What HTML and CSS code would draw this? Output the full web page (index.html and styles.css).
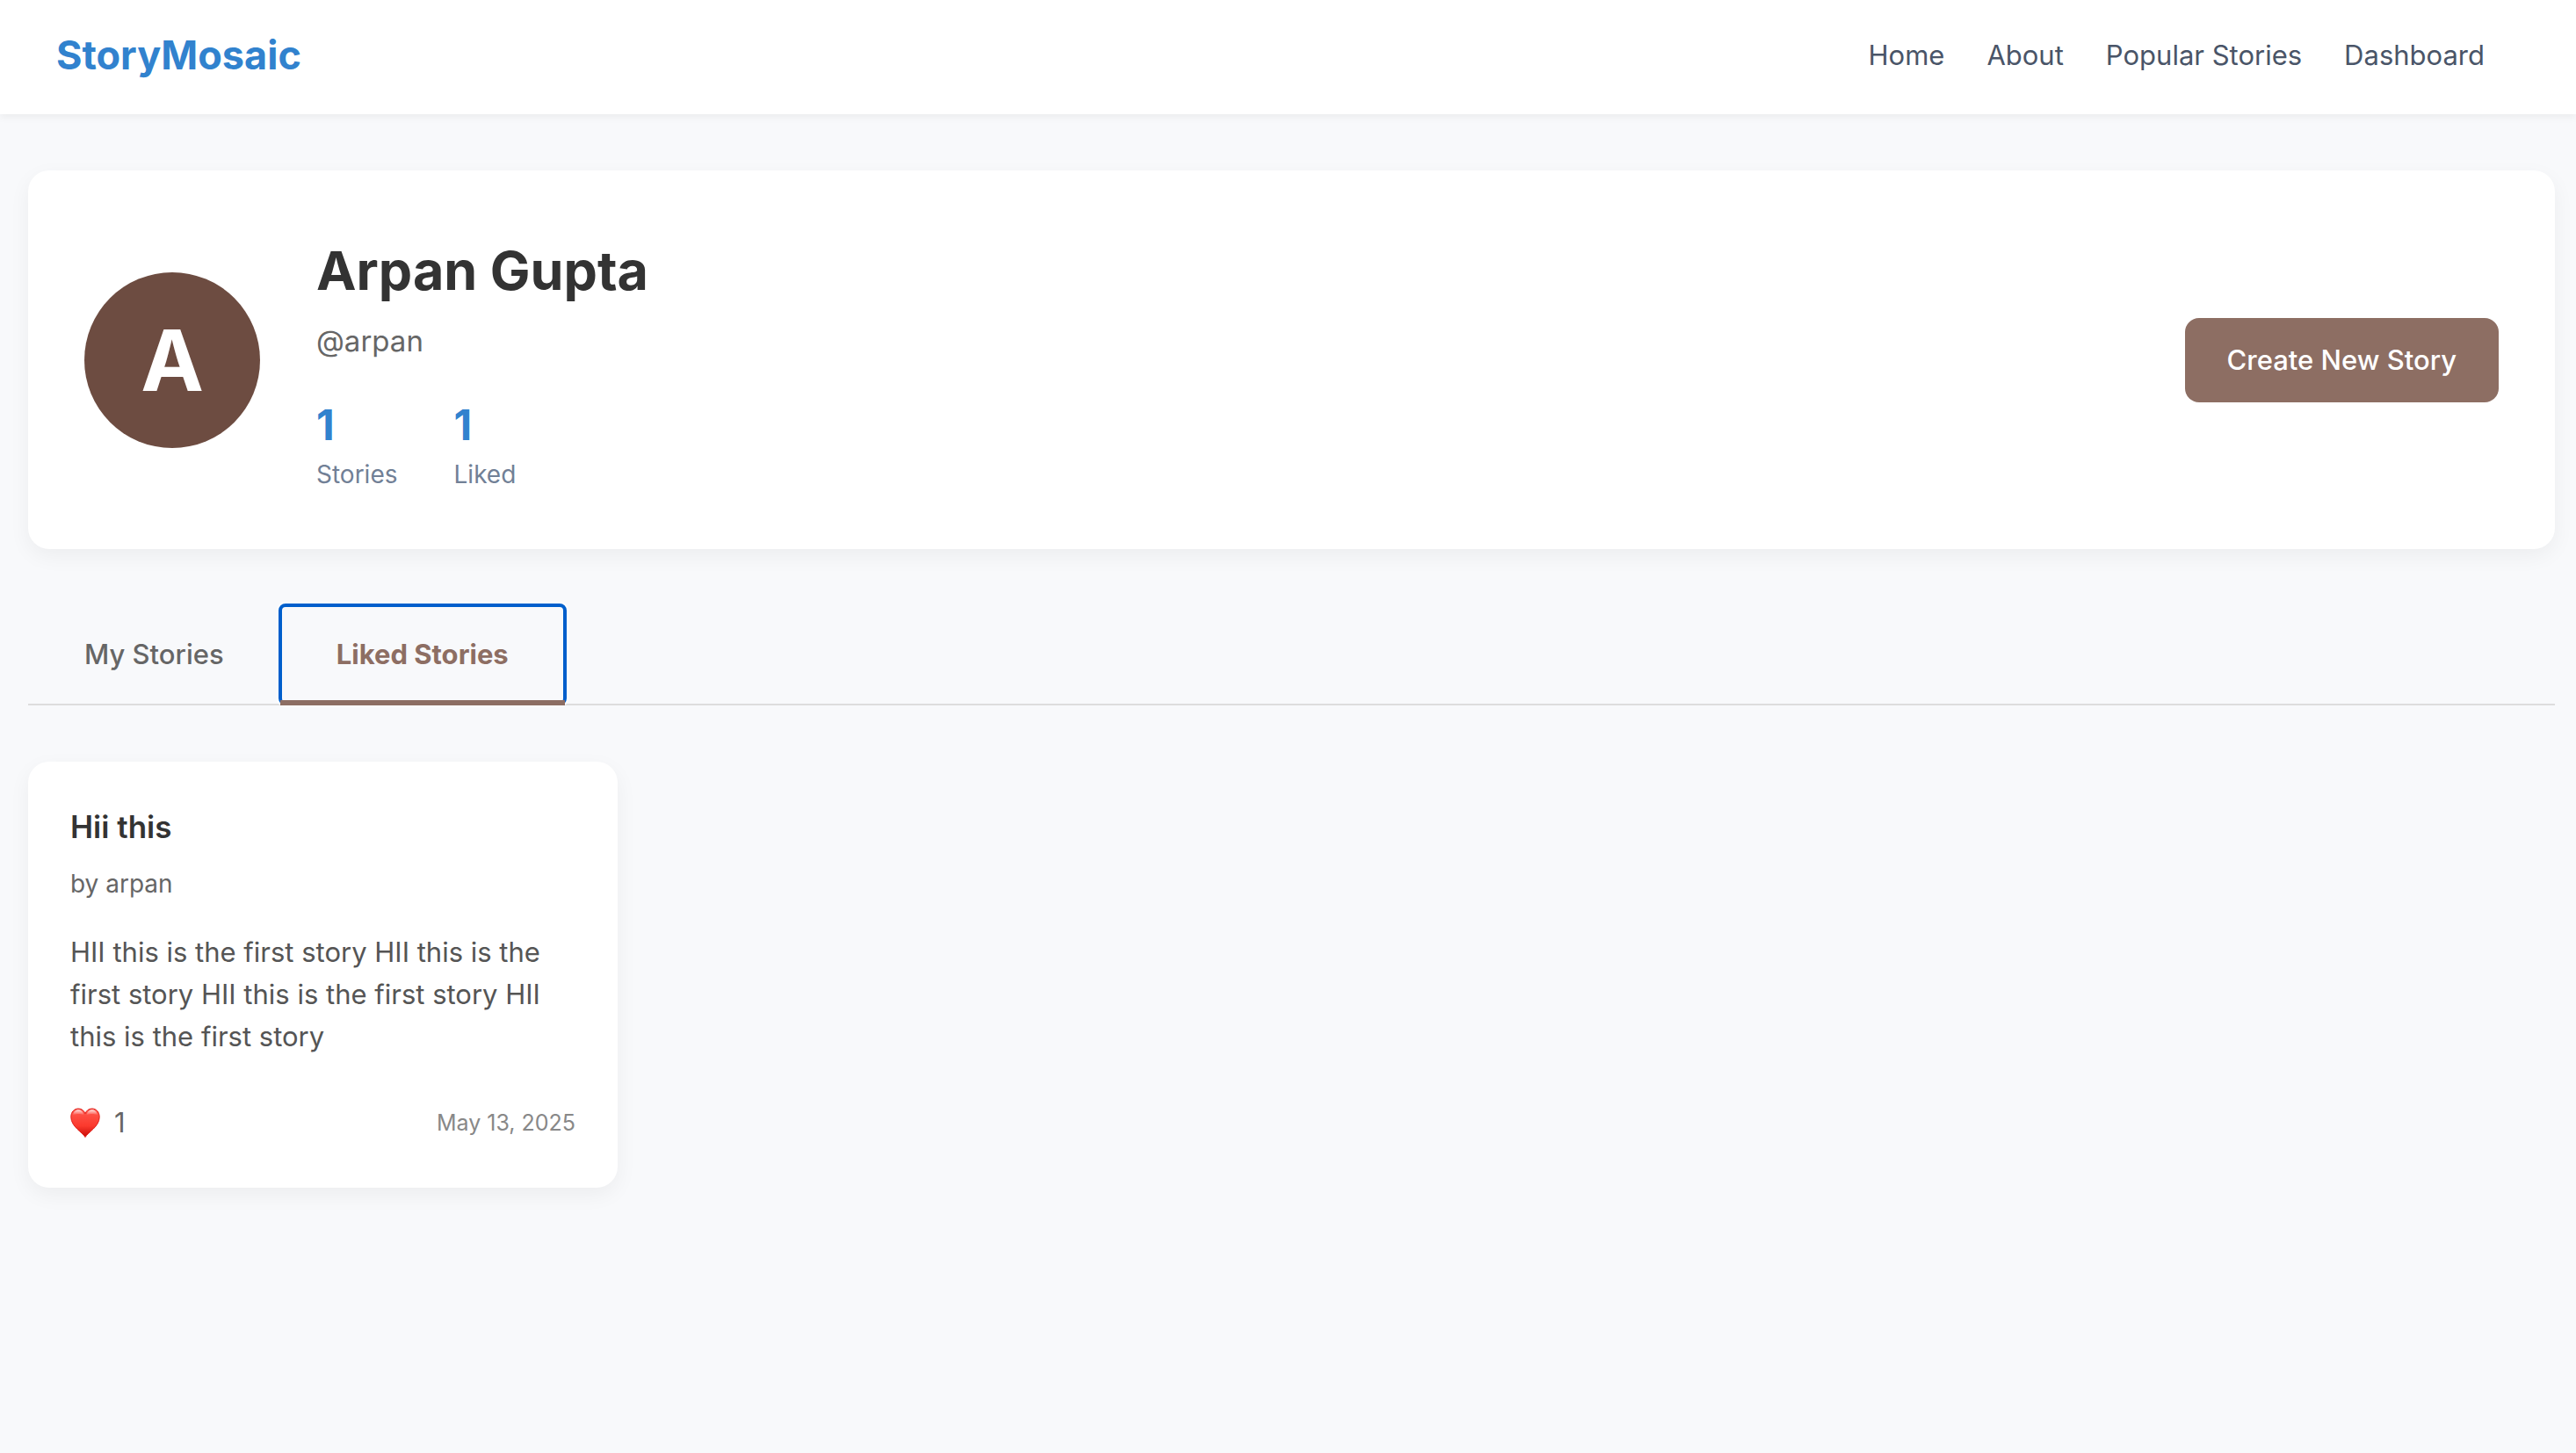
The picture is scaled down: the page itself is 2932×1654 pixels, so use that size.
FILE: index.html
```html
<!DOCTYPE html>
<html lang="en">
<head>
  <meta charset="utf-8">
  <meta name="viewport" content="width=device-width, initial-scale=1">
  <title>StoryMosaic</title>
  <link rel="stylesheet" href="styles.css">
</head>
<body>
  <header class="site-header">
    <a class="logo" href="#">StoryMosaic</a>
    <nav class="site-nav">
      <a href="#">Home</a>
      <a href="#">About</a>
      <a href="#">Popular Stories</a>
      <a href="#">Dashboard</a>
    </nav>
  </header>

  <main class="dashboard">
    <section class="profile">
      <div class="avatar">A</div>
      <div class="profile-info">
        <h1 class="profile-name">Arpan Gupta</h1>
        <p class="profile-handle">@arpan</p>
        <div class="stats">
          <div class="stat">
            <span class="stat-value">1</span>
            <span class="stat-label">Stories</span>
          </div>
          <div class="stat">
            <span class="stat-value">1</span>
            <span class="stat-label">Liked</span>
          </div>
        </div>
      </div>
      <button class="create-button" type="button">Create New Story</button>
    </section>

    <div class="tabs" role="tablist">
      <button class="tab" type="button" role="tab" aria-selected="false">My Stories</button>
      <button class="tab tab-active" type="button" role="tab" aria-selected="true">Liked Stories</button>
    </div>

    <section class="stories">
      <article class="story">
        <h2 class="story-title">Hii this</h2>
        <p class="story-author">by arpan</p>
        <p class="story-text">HII this is the first story HII this is the first story HII this is the first story HII this is the first story</p>
        <footer class="story-footer">
          <span class="likes">
            <svg class="heart" viewBox="0 0 34 34" aria-hidden="true">
              <defs>
                <linearGradient id="heart-fill" x1="0" y1="0" x2="0" y2="1">
                  <stop offset="0" stop-color="#ff5a50"/>
                  <stop offset="0.6" stop-color="#fb3a2e"/>
                  <stop offset="1" stop-color="#c80a06"/>
                </linearGradient>
                <linearGradient id="heart-shine" x1="0" y1="0" x2="0" y2="1">
                  <stop offset="0" stop-color="#fff" stop-opacity="0.8"/>
                  <stop offset="1" stop-color="#fff" stop-opacity="0"/>
                </linearGradient>
              </defs>
              <path d="M17 33.500C14 28 .8 21.500.8 10.500C.8 5 4.300 1 9.200 1C13 1 15.800 3.200 17 6.800C18.200 3.200 21 1 24.800 1C29.700 1 33.200 5 33.200 10.500C33.200 21.500 20 28 17 33.500Z" fill="url(#heart-fill)" stroke="#e0201a"/>
              <path d="M3 8.500C3.500 4.500 6 2.200 9.200 2.200C12.500 2.200 14.800 4.500 15.500 8.500C12 6.500 7 6.500 3 8.500ZM31 8.500C30.500 4.500 28 2.200 24.800 2.200C21.500 2.200 19.200 4.500 18.500 8.500C22 6.500 27 6.500 31 8.500Z" fill="url(#heart-shine)"/>
            </svg>
            1
          </span>
          <time class="story-date" datetime="2025-05-13">May 13, 2025</time>
        </footer>
      </article>
    </section>
  </main>
</body>
</html>
```
FILE: styles.css
```css
*,
*::before,
*::after {
  box-sizing: border-box;
}

body {
  margin: 0;
  background: #f8f9fb;
  color: #333;
  font-family: Inter, "Liberation Sans", sans-serif;
  font-size: 31px;
  line-height: 48px;
}

h1,
h2,
p {
  margin: 0;
}

a {
  text-decoration: none;
}

button {
  border: 0;
  font: inherit;
  cursor: pointer;
}

.site-header {
  display: flex;
  align-items: center;
  justify-content: space-between;
  padding: 27px 104px 31px 64px;
  background: #fff;
  box-shadow: 0 4px 8px rgba(0, 0, 0, 0.05);
}

.logo {
  color: #3182ce;
  font-size: 45px;
  font-weight: 700;
  line-height: 72px;
}

.site-nav {
  display: flex;
  gap: 48px;
}

.site-nav a {
  color: #4a5568;
}

.dashboard {
  padding: 64px 24px 64px 32px;
}

.profile {
  display: flex;
  align-items: center;
  gap: 64px;
  padding: 64px;
  background: #fff;
  border-radius: 24px;
  box-shadow: 0 8px 24px rgba(0, 0, 0, 0.05);
}

.avatar {
  display: flex;
  flex: none;
  align-items: center;
  justify-content: center;
  width: 200px;
  height: 200px;
  border-radius: 50%;
  background: #6d4c41;
  color: #fff;
  font-size: 96px;
  font-weight: 700;
}

.profile-info {
  flex: 1;
}

.profile-name {
  margin-bottom: 4px;
  font-size: 61px;
  font-weight: 700;
  line-height: 100px;
}

.profile-handle {
  margin-bottom: 34px;
  color: #666;
  font-size: 33px;
  line-height: 52px;
}

.stats {
  display: flex;
  gap: 64px;
}

.stat {
  display: flex;
  flex-direction: column;
}

.stat-value {
  color: #3182ce;
  font-size: 48px;
  font-weight: 700;
  line-height: 72px;
}

.stat-label {
  color: #718096;
  font-size: 28px;
  line-height: 41px;
}

.create-button {
  padding: 24px 48px;
  border-radius: 16px;
  background: #8d6e63;
  color: #fff;
  font-weight: 500;
}

.tabs {
  display: flex;
  margin: 64px 0;
  border-bottom: 2px solid #ddd;
}

.tab {
  position: relative;
  padding: 32px 64px;
  background: none;
  color: #666;
  font-weight: 500;
}

.tab-active {
  border-radius: 6px;
  outline: 4px solid #005fcc;
  outline-offset: -2px;
  box-shadow: 0 0 0 4px #fff;
  background: #f8f9fb;
  color: #8d6e63;
  font-weight: 700;
}

.tab-active::after {
  content: "";
  position: absolute;
  right: 0;
  bottom: -2px;
  left: 0;
  height: 6px;
  background: #8d6e63;
}

.stories {
  display: grid;
  grid-template-columns: repeat(auto-fill, minmax(600px, 1fr));
  gap: 64px;
}

.story {
  padding: 48px;
  background: #fff;
  border-radius: 24px;
  box-shadow: 0 8px 24px rgba(0, 0, 0, 0.05);
}

.story-title {
  margin-bottom: 16px;
  font-size: 35px;
  font-weight: 600;
  line-height: 53px;
}

.story-author {
  margin-bottom: 32px;
  color: #666;
  font-size: 28px;
  line-height: 44px;
}

.story-text {
  margin-bottom: 48px;
  color: #555;
}

.story-footer {
  display: flex;
  align-items: center;
  justify-content: space-between;
  min-height: 52px;
}

.likes {
  display: flex;
  align-items: center;
  gap: 16px;
  color: #666;
}

.heart {
  width: 34px;
  height: 34px;
}

.story-date {
  color: #888;
  font-size: 25px;
}
```
